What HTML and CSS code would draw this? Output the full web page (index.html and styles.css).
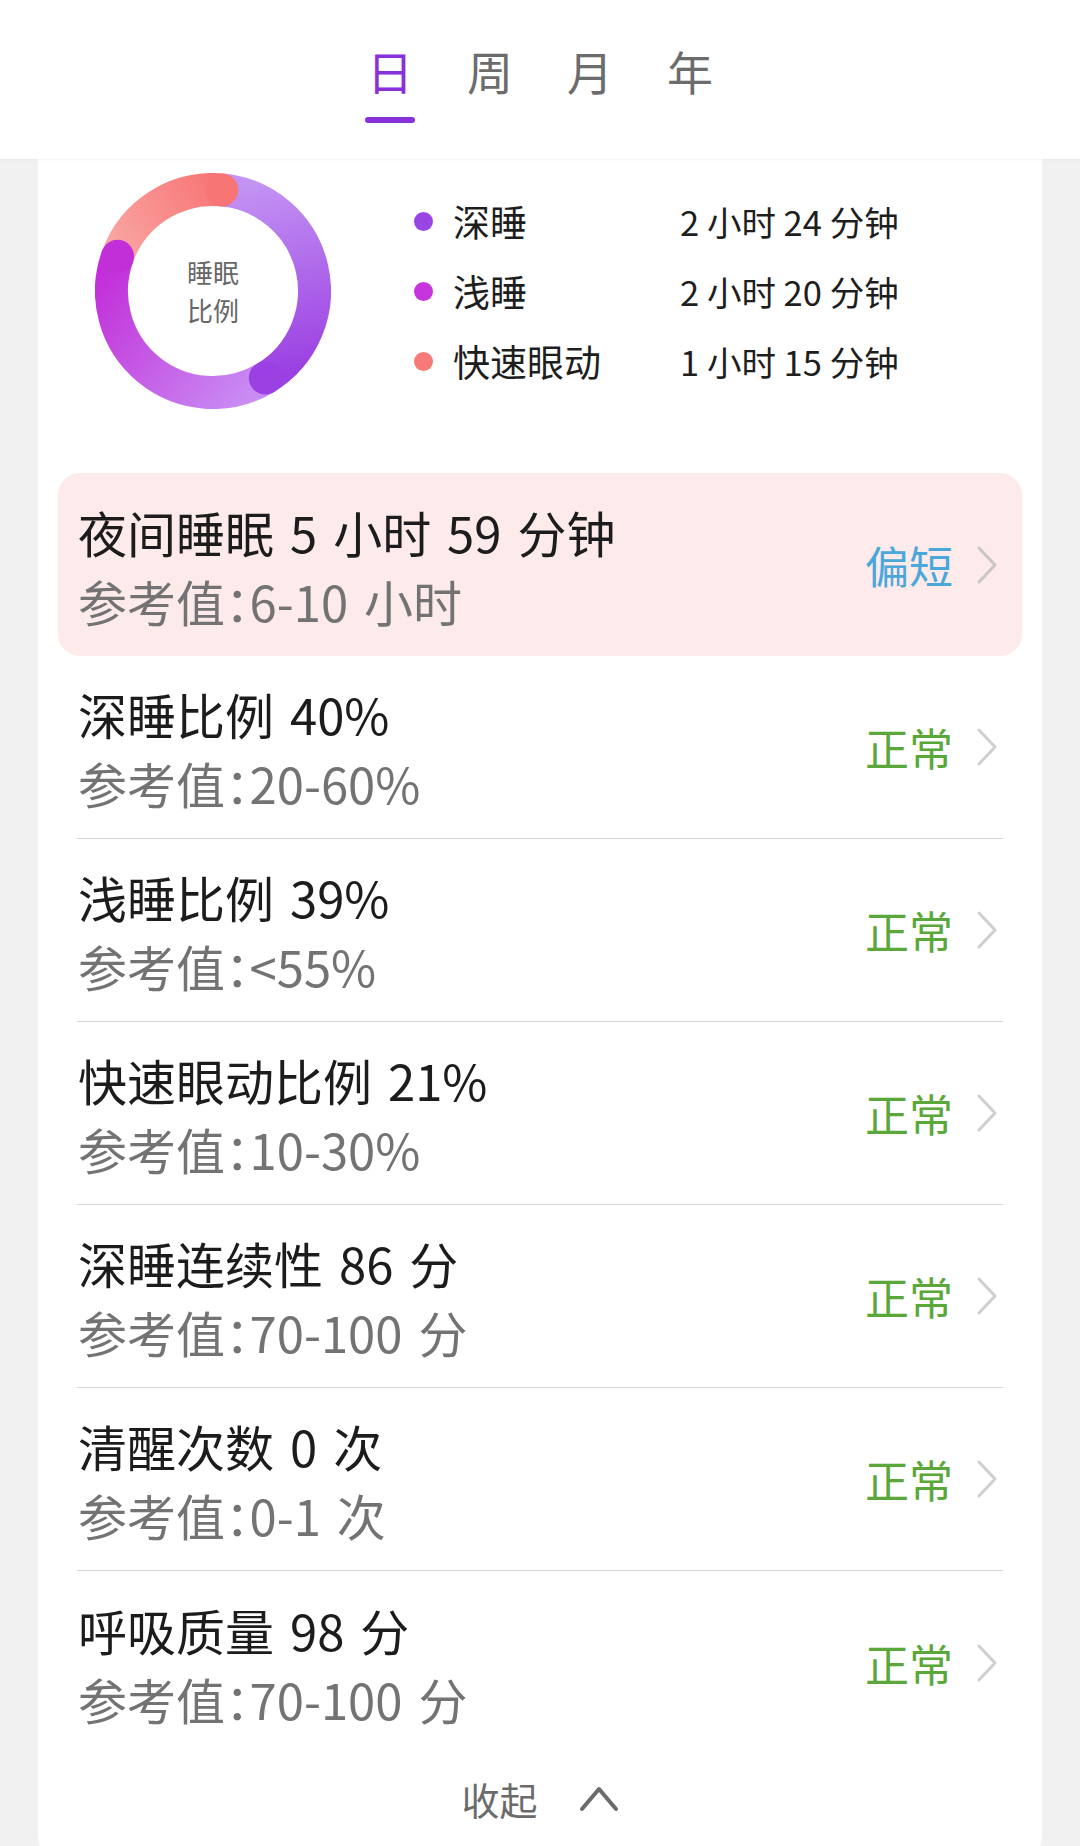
FILE: index.html
```html
<!DOCTYPE html>
<html lang="zh">
<head>
<meta charset="utf-8">
<title>睡眠</title>
<link rel="stylesheet" href="styles.css">
</head>
<body>
<header class="header">
  <nav class="tabs">
    <div class="tab active"><span class="tab-text">日</span><span class="tab-bar"></span></div>
    <div class="tab"><span class="tab-text">周</span><span class="tab-bar"></span></div>
    <div class="tab"><span class="tab-text">月</span><span class="tab-bar"></span></div>
    <div class="tab"><span class="tab-text">年</span><span class="tab-bar"></span></div>
  </nav>
</header>
<main class="card">
  <section class="summary">
    <div class="donut">
      <svg width="236" height="236" viewBox="0 0 236 236">
        <defs>
          <linearGradient id="gDeep" gradientUnits="userSpaceOnUse" x1="127" y1="17" x2="170" y2="205">
            <stop offset="0" stop-color="#c393f3"/>
            <stop offset="1" stop-color="#9b40e2"/>
          </linearGradient>
          <linearGradient id="gLight" gradientUnits="userSpaceOnUse" x1="170" y1="205" x2="23" y2="83">
            <stop offset="0" stop-color="#c98cf3"/>
            <stop offset="1" stop-color="#c22fd9"/>
          </linearGradient>
          <linearGradient id="gRem" gradientUnits="userSpaceOnUse" x1="23" y1="83" x2="127" y2="17">
            <stop offset="0" stop-color="#f9a5a2"/>
            <stop offset="1" stop-color="#f87576"/>
          </linearGradient>
        </defs>
        <path d="M 22.6 83.3 A 101.5 101.5 0 0 1 126.8 16.9" fill="none" stroke="url(#gRem)" stroke-width="33"/>
        <path d="M 126.8 16.9 A 101.5 101.5 0 0 1 170.3 205.0" fill="none" stroke="url(#gDeep)" stroke-width="33"/>
        <path d="M 170.3 205.0 A 101.5 101.5 0 0 1 22.6 83.3" fill="none" stroke="url(#gLight)" stroke-width="33"/>
        <circle cx="126.8" cy="16.9" r="16.5" fill="#f87576"/>
        <circle cx="170.3" cy="205.0" r="16.5" fill="#9b40e2"/>
        <circle cx="22.6" cy="83.3" r="16.5" fill="#c22fd9"/>
      </svg>
      <div class="donut-label"><span class="label-line">睡眠</span><span class="label-line">比例</span></div>
    </div>
    <ul class="legend">
      <li class="legend-row"><span class="dot dot-deep"></span><span class="legend-name">深睡</span><span class="legend-val">2 小时 24 分钟</span></li>
      <li class="legend-row"><span class="dot dot-light"></span><span class="legend-name">浅睡</span><span class="legend-val">2 小时 20 分钟</span></li>
      <li class="legend-row"><span class="dot dot-rem"></span><span class="legend-name">快速眼动</span><span class="legend-val">1 小时 15 分钟</span></li>
    </ul>
  </section>

  <section class="list">
    <div class="row warn">
      <div class="row-text"><div class="row-title">夜间睡眠 5 小时 59 分钟</div><div class="row-sub">参考值：6-10 小时</div></div>
      <div class="row-status short">偏短</div>
      <svg class="chev" width="22" height="40" viewBox="0 0 22 40"><polyline points="3,3 19,20 3,37" fill="none" stroke="#c9c6c6" stroke-width="3" stroke-linecap="round" stroke-linejoin="round"/></svg>
    </div>
    <div class="row">
      <div class="row-text"><div class="row-title">深睡比例 40%</div><div class="row-sub">参考值：20-60%</div></div>
      <div class="row-status ok">正常</div>
      <svg class="chev" width="22" height="40" viewBox="0 0 22 40"><polyline points="3,3 19,20 3,37" fill="none" stroke="#cfcfcf" stroke-width="3" stroke-linecap="round" stroke-linejoin="round"/></svg>
    </div>
    <div class="row">
      <div class="row-text"><div class="row-title">浅睡比例 39%</div><div class="row-sub">参考值：&lt;55%</div></div>
      <div class="row-status ok">正常</div>
      <svg class="chev" width="22" height="40" viewBox="0 0 22 40"><polyline points="3,3 19,20 3,37" fill="none" stroke="#cfcfcf" stroke-width="3" stroke-linecap="round" stroke-linejoin="round"/></svg>
    </div>
    <div class="row">
      <div class="row-text"><div class="row-title">快速眼动比例 21%</div><div class="row-sub">参考值：10-30%</div></div>
      <div class="row-status ok">正常</div>
      <svg class="chev" width="22" height="40" viewBox="0 0 22 40"><polyline points="3,3 19,20 3,37" fill="none" stroke="#cfcfcf" stroke-width="3" stroke-linecap="round" stroke-linejoin="round"/></svg>
    </div>
    <div class="row">
      <div class="row-text"><div class="row-title">深睡连续性 86 分</div><div class="row-sub">参考值：70-100 分</div></div>
      <div class="row-status ok">正常</div>
      <svg class="chev" width="22" height="40" viewBox="0 0 22 40"><polyline points="3,3 19,20 3,37" fill="none" stroke="#cfcfcf" stroke-width="3" stroke-linecap="round" stroke-linejoin="round"/></svg>
    </div>
    <div class="row">
      <div class="row-text"><div class="row-title">清醒次数 0 次</div><div class="row-sub">参考值：0-1 次</div></div>
      <div class="row-status ok">正常</div>
      <svg class="chev" width="22" height="40" viewBox="0 0 22 40"><polyline points="3,3 19,20 3,37" fill="none" stroke="#cfcfcf" stroke-width="3" stroke-linecap="round" stroke-linejoin="round"/></svg>
    </div>
    <div class="row last">
      <div class="row-text"><div class="row-title">呼吸质量 98 分</div><div class="row-sub">参考值：70-100 分</div></div>
      <div class="row-status ok">正常</div>
      <svg class="chev" width="22" height="40" viewBox="0 0 22 40"><polyline points="3,3 19,20 3,37" fill="none" stroke="#cfcfcf" stroke-width="3" stroke-linecap="round" stroke-linejoin="round"/></svg>
    </div>
  </section>

  <div class="collapse">
    <span class="collapse-text">收起</span>
    <svg width="40" height="28" viewBox="0 0 40 28"><polyline points="3,25 20,5 37,25" fill="none" stroke="#6b6b6b" stroke-width="4" stroke-linecap="round" stroke-linejoin="round"/></svg>
  </div>
</main>
</body>
</html>
```

FILE: styles.css
```css
* { box-sizing: border-box; }

html, body {
  margin: 0;
  padding: 0;
}

body {
  width: 1080px;
  height: 1846px;
  overflow: hidden;
  background: #f1f1f1;
  font-family: "Noto Sans CJK SC", "Noto Sans", sans-serif;
  color: #1c1c1c;
}

.header {
  position: relative;
  z-index: 2;
  height: 159px;
  background: #ffffff;
  box-shadow: 0 1px 2px rgba(0, 0, 0, 0.04);
}

.tabs {
  display: flex;
  justify-content: center;
  gap: 54px;
  padding-top: 42px;
}

.tab {
  display: flex;
  flex-direction: column;
  align-items: center;
  width: 46px;
}

.tab-text {
  font-size: 46px;
  line-height: 56px;
  color: #6c6c6c;
}

.tab-bar {
  width: 50px;
  height: 6px;
  margin-top: 19px;
  border-radius: 3px;
  background: transparent;
}

.tab.active .tab-text { color: #8a30d9; }
.tab.active .tab-bar { background: #8a30d9; }

.card {
  margin: 0 38px;
  height: 1710px;
  background: #ffffff;
  border-radius: 0 0 34px 34px;
  overflow: hidden;
}

.summary {
  display: flex;
  align-items: center;
  padding: 14px 0 0 57px;
}

.donut {
  position: relative;
  width: 236px;
  height: 236px;
  flex: none;
}

.donut svg { display: block; }

.donut-label {
  position: absolute;
  inset: 0;
  display: flex;
  flex-direction: column;
  align-items: center;
  justify-content: center;
}

.label-line {
  display: block;
  font-size: 26px;
  line-height: 38px;
  color: #676767;
}

.legend {
  list-style: none;
  margin: 0 0 0 83px;
  padding: 0;
}

.legend-row {
  display: flex;
  align-items: center;
  height: 70px;
}

.dot {
  width: 19px;
  height: 19px;
  border-radius: 50%;
  margin-right: 20px;
  flex: none;
}

.dot-deep { background: #9945e4; }
.dot-light { background: #c634dd; }
.dot-rem { background: #f67a78; }

.legend-name {
  width: 227px;
  font-size: 37px;
  color: #1e1e1e;
}

.legend-val {
  font-size: 34.5px;
  color: #1e1e1e;
}

.list {
  margin: 64px 20px 0;
}

.row {
  display: flex;
  align-items: center;
  height: 183px;
  margin: 0 19px;
  padding: 0 5px 0 1px;
  border-bottom: 1.5px solid #d6d6d6;
}

.row.warn {
  margin: 0;
  padding: 0 24px 0 20px;
  background: #fdeaea;
  border-radius: 22px;
  border-bottom: none;
}

.row.last { border-bottom: none; }

.row-text {
  flex: 1;
  padding-top: 2px;
}

.row-title {
  font-size: 49px;
  line-height: 69px;
  word-spacing: 5px;
  color: #1c1c1c;
}

.row-sub {
  font-size: 49px;
  line-height: 69px;
  word-spacing: 5px;
  font-feature-settings: "halt";
  color: #737373;
}

.row-status {
  font-size: 44px;
  margin-right: 23px;
}

.row-status.short { color: #4aa7da; }
.row-status.ok { color: #5ba83a; }

.chev { display: block; flex: none; }

.collapse {
  display: flex;
  align-items: center;
  justify-content: center;
  gap: 41px;
  height: 88px;
}

.collapse-text {
  font-size: 38px;
  color: #6b6b6b;
}

.collapse svg { display: block; }
```
